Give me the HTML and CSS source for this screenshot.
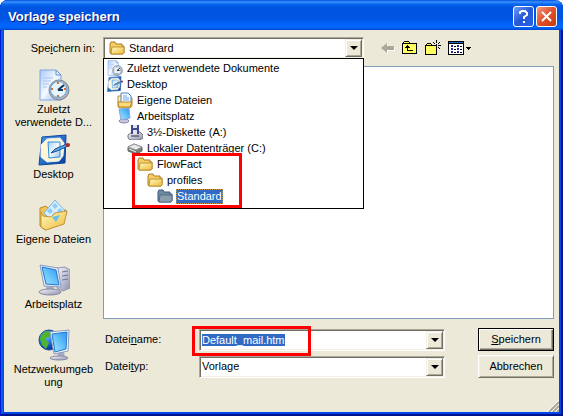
FILE: index.html
```html
<!DOCTYPE html>
<html lang="de">
<head>
    <meta charset="UTF-8">
    <meta name="viewport" content="width=device-width, initial-scale=1.0">
    <title>Vorlage speichern</title>
    <link rel="stylesheet" href="styles.css">
</head>
<body>
    <!-- Shared icons -->
    <svg class="sprite" aria-hidden="true">
        <defs>
            <linearGradient id="g-folder" x1="0" y1="0" x2="1" y2="1">
                <stop offset="0" stop-color="#fffbc0"/><stop offset="1" stop-color="#efb93c"/>
            </linearGradient>
            <linearGradient id="g-screen" x1="0" y1="1" x2="1" y2="0">
                <stop offset="0" stop-color="#a5e6ff"/><stop offset="0.5" stop-color="#64c4fa"/><stop offset="1" stop-color="#2f8df0"/>
            </linearGradient>
            <linearGradient id="g-paper" x1="0" y1="0" x2="1" y2="1">
                <stop offset="0" stop-color="#a9c9fa"/><stop offset="0.5" stop-color="#f4f9ff"/><stop offset="1" stop-color="#8fb7f0"/>
            </linearGradient>
            <linearGradient id="g-blue" x1="0" y1="0" x2="1" y2="1">
                <stop offset="0" stop-color="#4b9bee"/><stop offset="1" stop-color="#083e9c"/>
            </linearGradient>
            <linearGradient id="g-metal" x1="0" y1="0" x2="1" y2="1">
                <stop offset="0" stop-color="#f6f6fb"/><stop offset="1" stop-color="#8d90ad"/>
            </linearGradient>
            <radialGradient id="g-globe" cx="0.35" cy="0.3" r="0.75">
                <stop offset="0" stop-color="#7cc6ff"/><stop offset="0.5" stop-color="#1d6fe0"/><stop offset="1" stop-color="#062a86"/>
            </radialGradient>
        </defs>
        <symbol id="i-recent" viewBox="0 0 32 32">
            <path d="M2 1h16l5 5v25H2z" fill="url(#g-paper)" stroke="#7fa6e6"/>
            <path d="M18 1v5h5z" fill="#e9f3ff" stroke="#5f8cd8"/>
            <path d="M5 9h10M5 12h8M5 15h6M5 18h4" stroke="#a9c4ee"/>
            <circle cx="21" cy="21" r="10" fill="#aab1bb" stroke="#808894"/>
            <circle cx="20.500" cy="20.500" r="8" fill="#e4f3fc" stroke="#6ca5d3"/>
            <path d="M20 21l6-5M20 21l5 0" stroke="#17365f" stroke-width="2"/>
            <path d="M20 13v2M20 26v2M13 20h2M26 20h2" stroke="#e36b24" stroke-width="2"/>
        </symbol>
        <symbol id="i-desktop" viewBox="0 0 32 32">
            <path d="M4 3L28 1l-1 28-26 2z" fill="url(#g-blue)" stroke="#0d479d"/>
            <path d="M9 5l13-1 4 5-1 13-4 5-12 1-6-5V11z" fill="#fff6d8" stroke="#e6eefa"/>
            <path d="M10 8h12v15l-11 1z" fill="url(#g-paper)" stroke="#2c91df"/>
            <path d="M13 19l4-4 12-5 1 2-11 5z" fill="#61adeb" stroke="#144c91"/>
            <circle cx="30" cy="11" r="2" fill="#b62422"/>
        </symbol>
        <symbol id="i-mydocs" viewBox="0 0 32 32">
            <path d="M2 9l6-2 3 3 17 1-3 14-18 6-5-4z" fill="#efc45b" stroke="#bd8a2c"/>
            <path d="M17 1l12 13-10 13L6 14z" fill="#d7efff" stroke="#78b3e4"/>
            <path d="M17 4l3 3-3 3-3-3zM12 9l3 3-3 3-3-3zM22 9l3 3-3 3-3-3zM17 13l3 3-3 3-3-3z" fill="#8fcbf3"/>
            <path d="M3 13l2 4 8 1 4-4 12-2-3 13-18 6-5-3z" fill="url(#g-folder)" stroke="#c49635"/>
            <path d="M14 18l4 5 4-7z" fill="#66bdf0"/>
        </symbol>
        <symbol id="i-computer" viewBox="0 0 32 32">
            <path d="M19 4l8-1 5 3v18l-7 3-6-3z" fill="url(#g-metal)" stroke="#9293b1"/>
            <path d="M24 8l6-1M24 12l6-1M24 16l6-1" stroke="#717393"/>
            <path d="M8 23l7-1 2 5-8 1z" fill="#a7a9c3"/>
            <ellipse cx="12" cy="28" rx="11" ry="3" fill="url(#g-metal)" stroke="#8789a7"/>
            <path d="M2 1l18 3 3 19-17-1z" fill="#e5ecf8" stroke="#8d9bbf"/>
            <path d="M4 3l14 3 3 15-13-1z" fill="url(#g-screen)" stroke="#2478cc"/>
        </symbol>
        <symbol id="i-network" viewBox="0 0 32 32">
            <circle cx="11" cy="11" r="10" fill="url(#g-globe)" stroke="#1c4a91"/>
            <path d="M3 6l5-4 6 1-3 5-4 2 4 4-3 6-4-4-2-6zM14 9l5-2 1 9-5-2z" fill="#4fb52c"/>
            <path d="M20 23h6l1 6h-8z" fill="#a7a9c3"/>
            <ellipse cx="21" cy="29" rx="9" ry="2" fill="url(#g-metal)" stroke="#8789a7"/>
            <path d="M12 3l19-2-1 21-14 3z" fill="#f4f8ff" stroke="#8d9bbf"/>
            <path d="M14 5l15-2-1 17-11 3z" fill="url(#g-screen)" stroke="#2478cc"/>
        </symbol>
        <symbol id="i-docs" viewBox="0 0 16 16">
            <path d="M1 4h4l1 2h9v8l-2 2H2l-1-2z" fill="url(#g-folder)" stroke="#bd8a2c"/>
            <path d="M4 1h7l3 3v8H4z" fill="#f3f9ff" stroke="#4f86d0"/>
            <path d="M6 4h4M6 6h6M6 8h6" stroke="#77abe5"/>
            <path d="M1 10h14l-2 5H2z" fill="#f9dc7d" stroke="#bd8a2c"/>
        </symbol>
        <symbol id="i-pc" viewBox="0 0 16 16">
            <ellipse cx="7" cy="13" rx="5" ry="2" fill="#c7c8de" stroke="#8588ac"/>
            <path d="M2 1l10-1 1 10-9 2z" fill="url(#g-screen)" stroke="#91a5d8"/>
        </symbol>
        <symbol id="i-floppy" viewBox="0 0 16 16">
            <path d="M1 11l4-3h8l3 3v3l-3 2H3l-2-2z" fill="url(#g-metal)" stroke="#777"/>
            <path d="M4 1h8v9H4z" fill="#43488d"/>
            <path d="M6 1h4v3H6zM6 6h4v4H6z" fill="#dfe3f3"/>
            <path d="M4 12h8" stroke="#333"/>
        </symbol>
        <symbol id="i-drive" viewBox="0 0 16 16">
            <path d="M1 7l6-3 8 3v4l-6 3-8-3z" fill="#777" stroke="#666"/>
            <path d="M1 7l6-3 8 3-6 3z" fill="#e8e8e8" stroke="#999"/>
            <path d="M2 9l7 3" stroke="#eee"/><path d="M11 11h2" stroke="#4db84a"/>
        </symbol>
        <symbol id="i-folder" viewBox="0 0 16 16">
            <path d="M1 13V4l1-2h4l1 2h6v2h2v7l-1 1H2z" fill="#f5cf63" stroke="#a97b20"/>
            <path d="M3 7h12v6l-1 1H2z" fill="url(#g-folder)" stroke="#c09331"/>
        </symbol>
        <symbol id="i-folder-sel" viewBox="0 0 16 16">
            <path d="M1 13V4l1-2h4l1 2h6v2h2v7l-1 1H2z" fill="#6f8aa3" stroke="#3d5b7c"/>
            <path d="M3 7h12v6l-1 1H2z" fill="#8b9eab" stroke="#526f89"/>
        </symbol>
    </svg>

    <div class="dialog">
        <!-- Title bar -->
        <div class="title-bar">
            <h1>Vorlage speichern</h1>
            <button class="title-button" type="button" aria-label="Hilfe">
                <svg width="19" height="19" viewBox="0 0 19 19"><path d="M6 7V5l2-1h3l2 2v2l-3 2v2M10 14v2" fill="none" stroke="#fff" stroke-width="2"/></svg>
            </button>
            <button class="title-button close" type="button" aria-label="Schließen">
                <svg width="19" height="19" viewBox="0 0 19 19"><path d="M5 5l9 9M14 5l-9 9" stroke="#fff" stroke-width="2"/></svg>
            </button>
        </div>

        <form class="content">
            <!-- Look-in row -->
            <label class="look-label" for="look-in">Spe<u>i</u>chern in:</label>
            <div class="toolbar">
                <div class="combo look-in">
                    <svg class="icon"><use href="#i-folder"/></svg>
                    <select id="look-in"><option>Standard</option></select>
                    <span class="arrow"></span>
                    <ul class="drop-list">
                        <li><svg class="icon"><use href="#i-recent"/></svg><span>Zuletzt verwendete Dokumente</span></li>
                        <li><svg class="icon"><use href="#i-desktop"/></svg><span>Desktop</span></li>
                        <li class="level-1"><svg class="icon"><use href="#i-docs"/></svg><span>Eigene Dateien</span></li>
                        <li class="level-1"><svg class="icon"><use href="#i-pc"/></svg><span>Arbeitsplatz</span></li>
                        <li class="level-2"><svg class="icon"><use href="#i-floppy"/></svg><span>3½-Diskette (A:)</span></li>
                        <li class="level-2"><svg class="icon"><use href="#i-drive"/></svg><span>Lokaler Datenträger (C:)</span></li>
                        <li class="level-3"><svg class="icon"><use href="#i-folder"/></svg><span>FlowFact</span></li>
                        <li class="level-4"><svg class="icon"><use href="#i-folder"/></svg><span>profiles</span></li>
                        <li class="level-5 selected"><svg class="icon"><use href="#i-folder-sel"/></svg><span>Standard</span></li>
                    </ul>
                    <div class="marker marker-folder"></div>
                </div>
                <div class="tools">
                    <button type="button" aria-label="Zurück">
                        <svg width="14" height="16" viewBox="0 0 14 16"><path d="M1 9l6-5v3h7v4H7v3z" fill="#fff"/><path d="M0 8l6-5v3h7v4H6v3z" fill="#aca899"/></svg>
                    </button>
                    <button type="button" aria-label="Übergeordneter Ordner">
                        <svg width="16" height="16" viewBox="0 0 16 16" shape-rendering="crispEdges"><path d="M0 3h1V2h1V1h5v1h1v1h7v11H0z"/><path d="M1 4h13v9H1zM2 2h5v1H2z" fill="#ffff62"/><path d="M5 5h1v1h1v1h1v1H6v2h5v1H5V8H3V7h1V6h1z"/></svg>
                    </button>
                    <button type="button" aria-label="Neuer Ordner">
                        <svg width="16" height="16" viewBox="0 0 16 16" shape-rendering="crispEdges"><path d="M0 5h1V4h1V3h4v1h1v1h5v10H0z"/><path d="M1 6h10v8H1zM2 4h4v1H2z" fill="#ffff62"/><path d="M11 0h1v3h-1zM8 2h1v1H8zM9 3h1v1H9zM13 3h1v1h-1zM14 2h1v1h-1zM7 5h3v1H7zM13 5h3v1h-3zM11 7h1v2h-1zM13 7h1v1h-1zM14 8h1v1h-1zM11 4h1v2h-1z"/></svg>
                    </button>
                    <button type="button" aria-label="Ansichten">
                        <svg width="24" height="16" viewBox="0 0 24 16" shape-rendering="crispEdges"><path d="M0 1h16v14H0z"/><path d="M1 4h14v10H1z" fill="#fff"/><path d="M1 2h14v1H1z" fill="#2468c8"/><path d="M3 5h2v2H3zM3 8h2v2H3zM3 11h2v2H3zM9 5h2v2H9zM9 8h2v2H9zM9 11h2v2H9z" fill="#232394"/><path d="M6 6h2v1H6zM6 9h2v1H6zM6 12h2v1H6zM12 6h2v1h-2zM12 9h2v1h-2zM12 12h2v1h-2zM18 7h5v1h-5zM19 8h3v1h-3zM20 9h1v1h-1z"/></svg>
                    </button>
                </div>
            </div>

            <!-- Places bar -->
            <nav class="places">
                <button type="button"><svg><use href="#i-recent"/></svg><span>Zuletzt<br>verwendete D...</span></button>
                <button type="button"><svg><use href="#i-desktop"/></svg><span>Desktop</span></button>
                <button type="button"><svg><use href="#i-mydocs"/></svg><span>Eigene Dateien</span></button>
                <button type="button"><svg><use href="#i-computer"/></svg><span>Arbeitsplatz</span></button>
                <button type="button"><svg><use href="#i-network"/></svg><span>Netzwerkumgeb<br>ung</span></button>
            </nav>

            <div class="file-list"></div>

            <!-- File name and type -->
            <div class="fields">
                <label for="file-name">Datei<u>n</u>ame:</label>
                <div class="combo">
                    <input type="text" id="file-name" value="Default_mail.htm" autocomplete="off" spellcheck="false">
                    <span class="arrow"></span>
                    <div class="marker marker-name"></div>
                </div>
                <button class="push default" type="submit"><u>S</u>peichern</button>

                <label for="file-type">Datei<u>t</u>yp:</label>
                <div class="combo">
                    <select id="file-type"><option>Vorlage</option></select>
                    <span class="arrow"></span>
                </div>
                <button class="push" type="button">Abbrechen</button>
            </div>
        </form>
        <svg class="grip" width="12" height="12" viewBox="0 0 12 12"><path d="M0 12L12 0M4 12l8-8M8 12l4-4" stroke="#fff"/><path d="M2 12L12 2M6 12l6-6M10 12l2-2" stroke="#aca899" stroke-width="2"/></svg>
    </div>

    <script>
        const fileName = document.getElementById('file-name');
        fileName.focus();
        fileName.select();
    </script>
</body>
</html>
```

FILE: styles.css
```css
* {
    box-sizing: border-box;
}

body {
    margin: 0;
    background: #fff;
    color: #000;
    font-family: 'Liberation Sans', Arial, sans-serif;
    font-size: 11px;
    line-height: 13px;
}

button,
input,
select {
    margin: 0;
    padding: 0;
    border: none;
    border-radius: 0;
    background: none;
    color: inherit;
    font: inherit;
    outline: none;
}

.sprite {
    position: absolute;
    width: 0;
    height: 0;
}

/* Window frame */
.dialog {
    position: relative;
    display: flex;
    flex-direction: column;
    min-height: 100vh;
    padding: 0 4px 4px;
    background: #ece9d8;
    border-radius: 8px 8px 0 0;
    box-shadow: inset 1px 0 #0019cf, inset -2px -2px #00138c, inset 3px 0 #0a5bea, inset -4px -4px #0046e8, inset 4px 0 #0046e8;
}

.title-bar {
    display: flex;
    align-items: center;
    gap: 2px;
    height: 30px;
    margin: 0 -4px;
    padding: 3px 6px 0 8px;
    border-radius: 8px 8px 0 0;
    background: linear-gradient(#0050d8 0, #3c92ff 2px, #0868f0 4px, #0055e2 7px, #0054e0 18px, #0066ff 25px, #0062f8 28px, #0044c8 30px);
}

.title-bar h1 {
    flex: 1;
    margin: 0;
    color: #fff;
    font-size: 13px;
    line-height: 16px;
    text-shadow: 1px 1px #0a1883;
}

.title-button {
    width: 21px;
    height: 21px;
    border: 1px solid #fff;
    border-radius: 3px;
    background: linear-gradient(135deg, #6f9cf5, #2558d8 50%, #2563e8);
}

.title-button svg {
    display: block;
}

.title-button.close {
    background: linear-gradient(135deg, #f09a80, #e0502a 50%, #c83a10);
}

/* Dialog content */
.content {
    flex: 1;
    display: grid;
    grid-template-columns: 99px 1fr;
    grid-template-rows: auto 1fr auto;
    padding: 7px 5px 18px 0;
}

.look-label {
    padding: 5px 8px 0 0;
    text-align: right;
}

.toolbar {
    display: flex;
    gap: 17px;
    padding-bottom: 7px;
}

.tools {
    display: flex;
    align-items: center;
    gap: 7px;
}

.tools svg {
    display: block;
}

.icon {
    flex: none;
    width: 16px;
    height: 16px;
}

/* Combo boxes */
.combo {
    position: relative;
    display: flex;
    align-items: center;
    height: 22px;
    border: 1px solid;
    border-color: #aca899 #fff #fff #aca899;
    background: #fff;
    box-shadow: inset 1px 1px #716f64, inset -1px -1px #f1efe2;
}

.combo input,
.combo select {
    flex: 1;
    min-width: 0;
    height: 16px;
    padding-left: 2px;
    appearance: none;
}

.combo input::selection {
    background: #316ac5;
    color: #fff;
}

.arrow {
    display: flex;
    align-items: center;
    justify-content: center;
    width: 17px;
    height: 18px;
    margin-right: 1px;
    border: 1px solid;
    border-color: #f1efe2 #716f64 #716f64 #f1efe2;
    background: #ece9d8;
    box-shadow: inset 1px 1px #fff, inset -1px -1px #aca899;
}

.arrow::before {
    content: "";
    border: 4px solid transparent;
    border-top-color: #000;
    border-bottom-width: 0;
}

.look-in {
    width: 261px;
    padding-left: 5px;
}

.look-in select {
    padding-left: 4px;
}

.drop-list {
    position: absolute;
    top: 100%;
    left: -1px;
    right: -1px;
    margin: 0;
    padding: 1px 0 4px 3px;
    border: 1px solid #000;
    background: #fff;
    list-style: none;
}

.drop-list li {
    display: flex;
    align-items: center;
    gap: 3px;
    height: 16px;
}

.drop-list span {
    padding: 1px;
}

.drop-list .level-1 {
    padding-left: 10px;
}

.drop-list .level-2 {
    padding-left: 20px;
}

.drop-list .level-3 {
    padding-left: 30px;
}

.drop-list .level-4 {
    padding-left: 40px;
}

.drop-list .level-5 {
    padding-left: 50px;
}

.drop-list .selected span {
    background: #316ac5;
    color: #fff;
    outline: 1px dotted #ce953a;
    outline-offset: -1px;
}

/* Red callout frames */
.marker {
    position: absolute;
    border: 3px solid #f00;
    pointer-events: none;
}

.marker-folder {
    top: 115px;
    left: 28px;
    width: 110px;
    height: 55px;
}

.marker-name {
    top: -4px;
    left: -8px;
    width: 119px;
    height: 30px;
}

/* Places bar */
.places {
    grid-row: 2 / 4;
    grid-column: 1;
    display: flex;
    flex-direction: column;
    padding-top: 3px;
}

.places button {
    display: flex;
    flex-direction: column;
    align-items: center;
    gap: 2px;
    height: 65px;
}

.places svg {
    flex: none;
    width: 32px;
    height: 32px;
}

.file-list {
    border: 1px solid #7f9db9;
    background: #fff;
}

.fields {
    display: grid;
    grid-template-columns: 94px 1fr 76px;
    align-items: center;
    row-gap: 4px;
    padding: 9px 0 16px 2px;
}

.fields .combo {
    margin-right: 33px;
}

.push {
    height: 23px;
    border: 1px solid;
    border-color: #fff #716f64 #716f64 #fff;
    background: #ece9d8;
    box-shadow: inset 1px 1px #f1efe2, inset -1px -1px #aca899;
}

.push.default {
    border-color: #000;
    box-shadow: inset 1px 1px #fff, inset -1px -1px #716f64, inset -2px -2px #aca899;
}

.grip {
    position: absolute;
    right: 4px;
    bottom: 4px;
}
```
